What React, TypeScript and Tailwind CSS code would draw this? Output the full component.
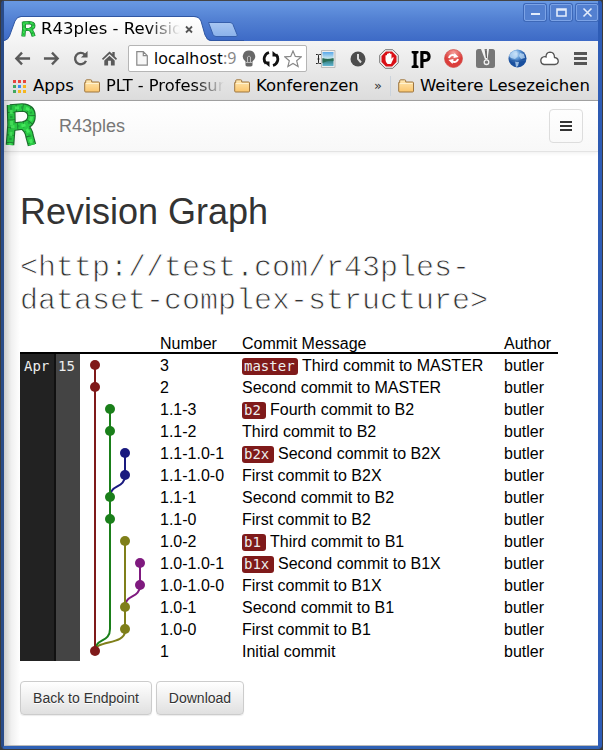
import React from 'react';

const UI = "font-['Noto_Sans','DejaVu_Sans',sans-serif]";
const SANS = "font-['Liberation_Sans',Arial,sans-serif]";

type Commit = { rev: string; tag?: string; msg: string; x: number; color: string };

const RED = '#7f1a1a';
const GREEN = '#1a7f1a';
const BLUE = '#1a1a7f';
const OLIVE = '#7f7f1a';
const PURPLE = '#7f1a7f';

const commits: Commit[] = [
  { rev: '3', tag: 'master', msg: 'Third commit to MASTER', x: 15, color: RED },
  { rev: '2', msg: 'Second commit to MASTER', x: 15, color: RED },
  { rev: '1.1-3', tag: 'b2', msg: 'Fourth commit to B2', x: 30, color: GREEN },
  { rev: '1.1-2', msg: 'Third commit to B2', x: 30, color: GREEN },
  { rev: '1.1-1.0-1', tag: 'b2x', msg: 'Second commit to B2X', x: 45, color: BLUE },
  { rev: '1.1-1.0-0', msg: 'First commit to B2X', x: 45, color: BLUE },
  { rev: '1.1-1', msg: 'Second commit to B2', x: 30, color: GREEN },
  { rev: '1.1-0', msg: 'First commit to B2', x: 30, color: GREEN },
  { rev: '1.0-2', tag: 'b1', msg: 'Third commit to B1', x: 45, color: OLIVE },
  { rev: '1.0-1.0-1', tag: 'b1x', msg: 'Second commit to B1X', x: 60, color: PURPLE },
  { rev: '1.0-1.0-0', msg: 'First commit to B1X', x: 60, color: PURPLE },
  { rev: '1.0-1', msg: 'Second commit to B1', x: 45, color: OLIVE },
  { rev: '1.0-0', msg: 'First commit to B1', x: 45, color: OLIVE },
  { rev: '1', msg: 'Initial commit', x: 15, color: RED },
];

const cy = (row: number) => 11 + row * 22;

function Logo({ className }: { className: string }) {
  const stem = 'M6 2 L6.500 22 L5 42';
  const bowl = 'M5 5.500 L17 4.500 Q26.500 5 26.500 13 Q26.500 21 18 22.500 L6 24';
  const leg = 'M18 22.500 Q24 27 24.500 33 L27 42';
  return (
    <svg className={className} viewBox="0 0 32 44" fill="none" preserveAspectRatio="none">
      <g stroke="#1b6b2c" strokeWidth="8.600">
        <path d={stem} /><path d={bowl} /><path d={leg} />
      </g>
      <g stroke="#2acb45" strokeWidth="6.400">
        <path d={stem} strokeDasharray="7 .6" />
        <path d={bowl} strokeDasharray="6 .6" />
        <path d={leg} strokeDasharray="6 .6" />
      </g>
      <g stroke="#1a9a38" strokeWidth="2.500" strokeDasharray="2 9" opacity=".7">
        <path d={stem} /><path d={bowl} /><path d={leg} />
      </g>
      <g stroke="#45e85c" strokeWidth="3" strokeDasharray="4 7" strokeDashoffset="6">
        <path d={stem} /><path d={bowl} /><path d={leg} />
      </g>
    </svg>
  );
}

function Folder() {
  return (
    <svg className="h-[14px] w-[16px] shrink-0" viewBox="0 0 16 14">
      <defs>
        <linearGradient id="folder" x2="0" y2="1">
          <stop stopColor="#ffe9b5" /><stop offset="1" stopColor="#fac56c" />
        </linearGradient>
      </defs>
      <path d="M.7 12V3.500h1V1.800q0-1 1-1h4q1 0 1 1v1.200h6.800q1 0 1 1v8q0 1-1 1H1.700q-1 0-1-1z" fill="url(#folder)" stroke="#9d7641" />
      <path d="M2 4.500h12.500" stroke="#fff2cf" />
    </svg>
  );
}

function WindowButton({ children }: { children: React.ReactNode }) {
  return (
    <div className="flex h-[17px] w-[22px] items-center justify-center rounded-[2px] border border-[#7ca3e6] bg-[#5380d0] shadow-[0_0_0_1px_#3d68b8]">
      <svg className="h-[13px] w-[17px] shrink-0" viewBox="0 0 17 13" fill="none" stroke="#e3ecfb" strokeWidth="1.600">{children}</svg>
    </div>
  );
}

function TitleBar() {
  return (
    <div className="flex h-[40px] items-start justify-between bg-linear-to-b from-[#6797e1] from-5% via-[#5381d3] via-45% to-[#3d6ac6]">
      <div className="relative mt-[15px] h-[25px] w-[240px]">
        <svg className="absolute inset-0 h-[25px] w-[240px]" viewBox="0 0 240 25">
          <defs>
            <linearGradient id="tab" x2="0" y2="1"><stop stopColor="#fff" /><stop offset="1" stopColor="#f4f4f4" /></linearGradient>
            <linearGradient id="newtab" x2="0" y2="1"><stop stopColor="#a9c7f2" /><stop offset="1" stopColor="#8ab1ea" /></linearGradient>
          </defs>
          <path d="M0 25Q4 24 5.500 20L11 5Q13 1 17 1H190Q195 1 197 5L201 19Q203 25 207 25z" fill="url(#tab)" />
          <path d="M0 24.500Q4 24 5.500 20L11 5Q13 .5 17 .5H190Q195 .5 197 5L201 19Q203 24.500 207 24.500H240" fill="none" stroke="#3057a3" />
          <path d="M204.500 6.500H226q2 0 3 2l4 10q1 2-1 2H212q-2 0-3-2l-4.500-12z" fill="url(#newtab)" stroke="#365fac" />
        </svg>
        <div className="relative flex h-full items-center pl-[17px]">
          <Logo className="h-[16px] w-[15px] shrink-0" />
          <span className="ml-[5px] w-[139px] overflow-hidden whitespace-nowrap bg-linear-to-r from-black from-76% to-transparent bg-clip-text font-['DejaVu_Sans',sans-serif] text-[16.500px] leading-[22px] text-transparent">R43ples - Revisio</span>
          <svg className="ml-[5px] mt-[2px] h-[9px] w-[8px] shrink-0" viewBox="0 0 8 9"><path d="M1 1.500l6 6M7 1.500l-6 6" stroke="#555" strokeWidth="1.800" /></svg>
        </div>
      </div>
      <div className="mt-[3px] flex gap-[4px]">
        <WindowButton><path d="M4 8h9" strokeWidth="2" /></WindowButton>
        <WindowButton><path d="M4 3h9v7H4zM4 4h9" /></WindowButton>
        <WindowButton><path d="M4.500 2.500l8 8M12.500 2.500l-8 8" /></WindowButton>
      </div>
    </div>
  );
}

function Cell({ w, children }: { w: string; children: React.ReactNode }) {
  return <div className={`flex shrink-0 items-center justify-center ${w}`}>{children}</div>;
}

function ToolBar() {
  const nav = 'h-[17px] w-[17px]';
  return (
    <div className="flex h-[35px] items-center pl-[4px]">
      <Cell w="w-[29px]"><svg className={nav} viewBox="0 0 18 18" fill="none" stroke="#5a5a5a" strokeWidth="2.500"><path d="M17 9H3M8.500 2.800L2.500 9l6 6.200" /></svg></Cell>
      <Cell w="w-[29px]"><svg className={nav} viewBox="0 0 18 18" fill="none" stroke="#5a5a5a" strokeWidth="2.500"><path d="M1 9h14M9.500 2.800l6 6.200-6 6.200" /></svg></Cell>
      <Cell w="w-[29px]"><svg className={nav} viewBox="0 0 18 18"><path d="M14.800 11.500A6 6 0 1 1 13.500 4.800" fill="none" stroke="#5a5a5a" strokeWidth="2.500" /><path d="M16.500 1v7h-7z" fill="#5a5a5a" /></svg></Cell>
      <Cell w="w-[29px]"><svg className={nav} viewBox="0 0 18 18" fill="#5a5a5a"><path d="M9 1.500l3 2.800V2h2.500v4.700L17 9.300l-1.200 1.200L9 4.300l-6.800 6.200L1 9.300z" /><path d="M9 6l5.500 5v5.500h-4v-5h-3v5h-4V11z" /></svg></Cell>
      <div className="ml-[4px] flex h-[27px] w-[179px] shrink-0 items-center rounded-[2px] border border-[#b5b5b5] bg-white pl-[7px]">
        <svg className="h-[15px] w-[12px] shrink-0" viewBox="0 0 12 15" fill="#f7f7f7" stroke="#888" strokeWidth="1.200"><path d="M.8.700h6.500l4 4v9.500H.8zM7.300.700v4h4" /></svg>
        <div className={`-mt-px ml-[6px] w-[86px] shrink-0 overflow-hidden whitespace-nowrap text-[16px] leading-[24px] text-black ${UI}`}><span className="tracking-[.15px]">localhost</span><span className="text-[#888]">:9</span></div>
        <svg className="ml-[2px] h-[17px] w-[14px] shrink-0" viewBox="0 0 14 17"><path d="M7 .5a6 6 0 0 1 3.500 11V15q0 1.500-3.500 1.500T3.500 15v-3.500A6 6 0 0 1 7 .5z" fill="#686868" /><path d="M5.500 12V7q1.500-2 3 0v5M3.500 12.500h7" fill="none" stroke="#bbb" /></svg>
        <svg className="ml-[6px] h-[18px] w-[18px] shrink-0" viewBox="0 0 18 18" fill="none" stroke="#111" strokeWidth="2.800"><path d="M7 2.500A6.700 6.700 0 0 0 4 13.500M11 15.500A6.700 6.700 0 0 0 14 4.500" /><path d="M1 11.500h6.500V17zM10.500 1v5.500H17z" fill="#111" stroke="none" /></svg>
        <svg className="ml-[4px] h-[18px] w-[18px] shrink-0" viewBox="0 0 18 18" fill="#fff" stroke="#888" strokeWidth="1.200"><path d="M9 1l2.300 5.400 5.900.5-4.500 3.900 1.400 5.700L9 13.500l-5.100 3 1.400-5.700L.8 6.900l5.900-.5z" /></svg>
      </div>
      <div className="ml-[3px] flex items-center">
        <Cell w="w-[32px]">
          <svg className="h-[18px] w-[20px]" viewBox="0 0 20 18">
            <defs><linearGradient id="photo" x2="0" y2="1"><stop stopColor="#58a7e9" /><stop offset=".45" stopColor="#cae7ee" /><stop offset=".55" stopColor="#2c756e" /><stop offset="1" stopColor="#62b6d3" /></linearGradient></defs>
            <path d="M5.500.5h13.500v17H5.500z" fill="#eee" stroke="#bbb" /><path d="M6.500 2h11v14h-11z" fill="url(#photo)" />
            <path d="M6.500 8q5 2 11 0v3q-5-1-11 2z" fill="#286c55" />
            <path d="M0 4.500h1.500q1 0 1 1v7q0 1-1 1H0M5 4.500H3.500q-1 0-1 1M5 13.500H3.500q-1 0-1-1M1.500 9h2" fill="none" stroke="#222" />
          </svg>
        </Cell>
        <Cell w="w-[31px]"><svg className="h-[16px] w-[16px]" viewBox="0 0 16 16"><circle cx="8" cy="8" r="7.500" fill="#4d4d4d" /><path d="M8 3v5l3 3.500" fill="none" stroke="#ddd" strokeWidth="2" /></svg></Cell>
        <Cell w="w-[32px]">
          <svg className="h-[20px] w-[20px]" viewBox="0 0 20 20"><path d="M6.200.7h7.600l5.500 5.500v7.600l-5.500 5.500H6.200L.7 13.800V6.200z" fill="#eee" stroke="#777" /><path d="M6.900 2.500h6.200l4.400 4.400v6.200l-4.400 4.400H6.900l-4.400-4.400V6.900z" fill="#d90f16" /><path d="M6.500 6.500q1-1 1.500 0V5q1-1 1.500 0V4.200q1-.8 1.500 0V5q1-1 1.500 0v5l1.500-2q1 0 .5 1.500L12 15H8.500q-2-2-2-4z" fill="#fff" /></svg>
        </Cell>
        <Cell w="w-[32px]"><span className="scale-y-110 font-['Noto_Sans',sans-serif] text-[21px] font-bold leading-[20px] tracking-[-.5px] text-black">IP</span></Cell>
        <Cell w="w-[32px]">
          <svg className="h-[19px] w-[19px]" viewBox="0 0 19 19"><defs><radialGradient id="sync" cy=".2"><stop stopColor="#f5a09c" /><stop offset="1" stopColor="#db3e3b" /></radialGradient></defs><circle cx="9.500" cy="9.500" r="9" fill="url(#sync)" stroke="#cf4c48" strokeWidth=".7" /><path d="M5 9q1-4 6-2.500M14 10q-1 4-6 2.500" fill="none" stroke="#fff" strokeWidth="2" /><path d="M10.500 4l4 4-5 1zM8.500 15l-4-4 5-1z" fill="#fff" /></svg>
        </Cell>
        <Cell w="w-[32px]"><svg className="h-[19px] w-[19px]" viewBox="0 0 19 19"><rect width="19" height="19" rx="2.500" fill="#777" /><path d="M5 0h3.500l1.500 9 1-9h2l-1.500 10.500H9z" fill="#f2f2f2" /><path d="M10 2l.5 7" stroke="#555" /><circle cx="10.500" cy="13.200" r="2.300" fill="#777" stroke="#f2f2f2" strokeWidth="1.300" /></svg></Cell>
        <Cell w="w-[32px]">
          <svg className="h-[19px] w-[19px]" viewBox="0 0 19 19"><defs><radialGradient id="globe" cy=".25" cx=".4"><stop stopColor="#e1f1ff" /><stop offset=".5" stopColor="#679fda" /><stop offset="1" stopColor="#194f9e" /></radialGradient></defs><circle cx="9.500" cy="9.500" r="9" fill="url(#globe)" /><path d="M3 4q3-3 6-2l-1 3 2 2-3 3-4-1-2-2zM12 4l4 1 1 4-4 1-2-3zM7 12l4 1-1 4-2 1z" fill="#bfdcf7" opacity=".75" /><path d="M1 11q9 3 17 0" fill="none" stroke="#275da6" /></svg>
        </Cell>
        <Cell w="w-[32px]"><svg className="h-[15px] w-[20px]" viewBox="0 0 20 15" fill="#fff" stroke="#555" strokeWidth="1.300"><path d="M5 13.500A4 4 0 0 1 4 6q1.500-.8 3 0Q7 1.500 11 1.200q4.500.2 4.500 5.300 3.500.5 3.800 3.700-.2 3-3.500 3.300z" /></svg></Cell>
        <Cell w="w-[31px]"><svg className="h-[13px] w-[13px]" viewBox="0 0 13 13"><path d="M0 0h13v3H0zM0 5h13v3H0zM0 10h13v3H0z" fill="#555" /></svg></Cell>
      </div>
    </div>
  );
}

function BookmarksBar() {
  const dots = ['#e8453c', '#e8453c', '#e8453c', '#41a85f', '#3b8df0', '#f5b61d', '#41a85f', '#f5b61d', '#f5b61d'];
  const label = "shrink-0 whitespace-nowrap font-['DejaVu_Sans',sans-serif] text-[16.500px] leading-[20px] text-black";
  return (
    <div className="flex h-[25px] items-center border-b border-[#a3a3a3] pb-[4px] pl-[9px]">
      <svg className="h-[13px] w-[13px] shrink-0" viewBox="0 0 13 13">
        {dots.map((fill, i) => <rect key={i} x={(i % 3) * 5} y={Math.floor(i / 3) * 5} width="3" height="3" fill={fill} />)}
      </svg>
      <span className={`ml-[7px] w-[51px] ${label}`}>Apps</span>
      <Folder />
      <span className="ml-[6px] w-[118px] shrink-0 overflow-hidden whitespace-nowrap bg-linear-to-r from-black from-75% to-transparent bg-clip-text font-['DejaVu_Sans',sans-serif] text-[16.300px] leading-[20px] text-transparent">PLT - Professur</span>
      <span className="ml-[10px] flex"><Folder /></span>
      <span className={`ml-[6px] w-[118px] ${label}`}>Konferenzen</span>
      <span className="w-[16px] font-['DejaVu_Sans',sans-serif] text-[13px] leading-[20px] text-[#333]">»</span>
      <span className="h-[20px] w-px bg-[#cbd3dc]" />
      <span className="ml-[7px] flex"><Folder /></span>
      <span className={`ml-[6px] ${label}`}>Weitere Lesezeichen</span>
    </div>
  );
}

function NavBar() {
  return (
    <div className={`flex h-[51px] items-center justify-between border-b border-[#e3e3e3] bg-linear-to-b from-white to-[#f8f8f8] pr-[15px] shadow-[0_1px_4px_rgba(0,0,0,.07)] ${SANS}`}>
      <div className="flex items-center">
        <Logo className="-mt-[3px] ml-px h-[44px] w-[32px]" />
        <span className="ml-[22px] text-[18px] leading-[20px] text-[#777]">R43ples</span>
      </div>
      <div className="flex h-[34px] w-[34px] items-center justify-center rounded-[4px] border border-[#ddd]">
        <div className="flex w-[12px] flex-col gap-[2px]">
          <span className="h-[2px] bg-[#333]" /><span className="h-[2px] bg-[#333]" /><span className="h-[2px] bg-[#333]" />
        </div>
      </div>
    </div>
  );
}

function Graph() {
  return (
    <svg className="h-[308px] w-[80px] shrink-0" viewBox="0 0 80 308" fill="none" strokeWidth="2">
      <path d="M45 275V277C45 291 15 286 15 297" stroke={OLIVE} />
      <path d="M30 55V275C30 289 15 284 15 297" stroke={GREEN} />
      <path d="M45 99V121C45 135 30 130 30 143" stroke={BLUE} />
      <path d="M60 209V231C60 245 45 240 45 253" stroke={PURPLE} />
      <path d="M45 187V275" stroke={OLIVE} />
      <path d="M15 11V297" stroke={RED} />
      <path d="M30 55V165" stroke={GREEN} />
      {commits.map((c, i) => <circle key={c.rev} cx={c.x} cy={cy(i)} r="5" fill={c.color} />)}
    </svg>
  );
}

function RevisionTable() {
  return (
    <div className={`mt-[15px] w-[538px] text-[16px] leading-[22px] text-black ${SANS}`}>
      <div className="flex h-[21px] border-b-2 border-black pl-[140px] leading-[22px]">
        <span className="w-[82px]">Number</span><span className="w-[262px]">Commit Message</span><span>Author</span>
      </div>
      <div className="flex h-[307px]">
        <div className="flex h-[307px] w-[60px] shrink-0 font-['DejaVu_Sans_Mono',monospace] text-[14px] leading-[24px] text-[#eee]">
          <div className="w-[36px] border-r-2 border-[#111] bg-[#222] pl-[4px]">Apr</div>
          <div className="w-[24px] bg-[#444] pl-[2px]">15</div>
        </div>
        <Graph />
        <div className="flex-1">
          {commits.map((c) => (
            <div key={c.rev} className="flex h-[22px] whitespace-nowrap leading-[23px]">
              <span className="w-[82px]">{c.rev}</span>
              <span className="flex w-[262px] items-start gap-[4px]">
                {c.tag && <span className="mt-[4px] h-[17px] rounded-[3px] bg-[#7f1a1a] pl-[2px] font-['DejaVu_Sans_Mono',monospace] text-[14px] leading-[17px] text-[#eee]" style={{ width: c.tag.length * 8 + 8 }}>{c.tag}</span>}
                <span>{c.msg}</span>
              </span>
              <span>butler</span>
            </div>
          ))}
        </div>
      </div>
    </div>
  );
}

function Button({ w, children }: { w: string; children: React.ReactNode }) {
  return (
    <button className={`h-[34px] rounded-[4px] border border-[#ccc] bg-linear-to-b from-white to-[#e0e0e0] text-[14px] leading-[20px] text-[#333] shadow-[0_1px_1px_rgba(0,0,0,.08)] [text-shadow:0_1px_0_#fff] ${w}`}>{children}</button>
  );
}

export default function App() {
  return (
    <div className="h-[750px] w-[603px] overflow-hidden bg-[#3a3a3a] px-px pb-px">
      <div className="flex h-[749px] flex-col rounded-[4px] border-b-[3px] border-l-[3px] border-r-[4px] border-t border-b-[#2f61b5] border-l-[#294b88] border-r-[#2e5cb6] border-t-[#444] bg-[#4474ca]">
        <TitleBar />
        <div className="bg-linear-to-b from-[#f4f4f4] to-[#dcdcdc]">
          <ToolBar />
          <BookmarksBar />
        </div>
        <div className="relative flex-1 border-b border-[#bbb] bg-white">
          <NavBar />
          <main className="pl-[16px]">
            <h1 className={`mt-[40px] text-[36px] leading-[40px] text-[#333] ${SANS}`}>Revision Graph</h1>
            <h2 className="mt-[20px] w-[540px] font-['Liberation_Mono',monospace] text-[30px] leading-[33px] text-[#333] [-webkit-text-stroke:.8px_#fff]">&lt;http://test.com/r43ples-<br />dataset-complex-structure&gt;</h2>
            <RevisionTable />
            <div className={`mt-[20px] flex gap-[4px] ${SANS}`}>
              <Button w="w-[132px]">Back to Endpoint</Button>
              <Button w="w-[88px]">Download</Button>
            </div>
          </main>
          <div className="pointer-events-none absolute inset-y-0 left-0 w-[16px] bg-linear-to-r from-black/20 via-black/6 via-45% to-transparent" />
        </div>
      </div>
    </div>
  );
}
